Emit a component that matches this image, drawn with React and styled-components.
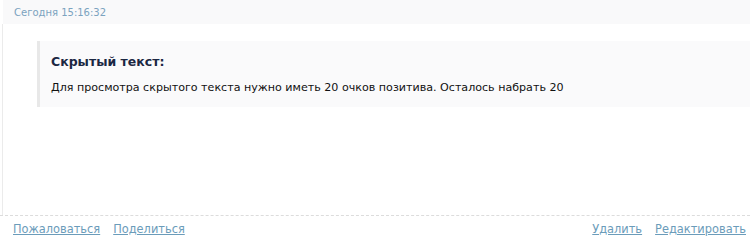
import React from "react"
import styled, { createGlobalStyle } from "styled-components"

const GlobalStyle = createGlobalStyle`
  html, body {
    margin: 0;
    padding: 0;
    background: #fff;
  }
  body {
    font-family: Tahoma, "DejaVu Sans", sans-serif;
  }
`

const Post = styled.div`
  width: 750px;
  height: 242px;
  display: flex;
  flex-direction: column;
  background: #fff;
`

const Header = styled.div`
  height: 24px;
  margin-left: 3px;
  padding-left: 11px;
  display: flex;
  align-items: center;
  background: #f9f9fa;
  color: #7ba3bf;
  font-size: 10px;
`

const Body = styled.div`
  flex: 1;
  margin-left: 2px;
  border-left: 1px solid #ebebeb;
  padding: 17px 0 0 34px;
`

const Hidden = styled.div`
  background: #fafafb;
  border-left: 3px solid #e8e8e8;
  padding: 13px 0 0 11px;
  height: 66px;
  box-sizing: border-box;
`

const HiddenTitle = styled.div`
  color: #1b2742;
  font-weight: bold;
  font-size: 12.5px;
  margin-bottom: 12px;
`

const HiddenText = styled.div`
  color: #111;
  font-size: 11.1px;
`

const Footer = styled.div`
  height: 25px;
  border-top: 1px dashed #dcdcdc;
  display: flex;
  align-items: center;
  justify-content: space-between;
  padding: 0 4px 1px 13px;
`

const Links = styled.div`
  display: flex;
  gap: 13px;
`

const Link = styled.a`
  color: #6b9cba;
  font-size: 11.4px;
  text-decoration: underline;
  cursor: pointer;
`

export default function App() {
  return (
    <Post>
      <GlobalStyle />
      <Header>Сегодня 15:16:32</Header>
      <Body>
        <Hidden>
          <HiddenTitle>Скрытый текст:</HiddenTitle>
          <HiddenText>
            Для просмотра скрытого текста нужно иметь 20 очков позитива. Осталось набрать 20
          </HiddenText>
        </Hidden>
      </Body>
      <Footer>
        <Links>
          <Link>Пожаловаться</Link>
          <Link>Поделиться</Link>
        </Links>
        <Links>
          <Link>Удалить</Link>
          <Link>Редактировать</Link>
        </Links>
      </Footer>
    </Post>
  )
}
